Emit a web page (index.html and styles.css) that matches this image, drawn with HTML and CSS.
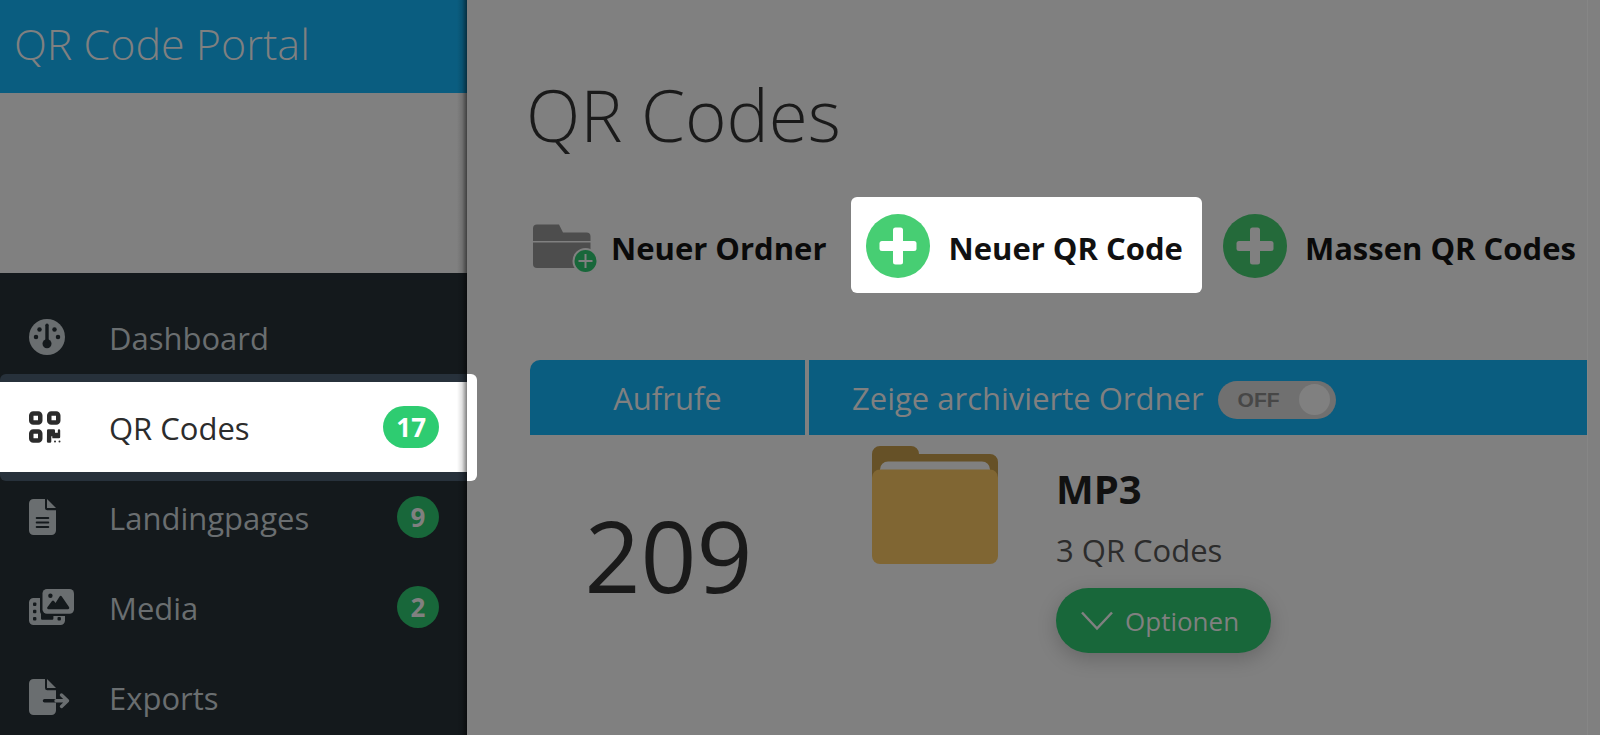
FILE: index.html
```
<!DOCTYPE html>
<html lang="de">
    <head>
        <meta charset="utf-8">
        <title>QR Code Portal</title>
        <link rel="stylesheet" href="styles.css">
    </head>
    <body>
        <aside class="sidebar">
            <header class="brand">QR Code Portal</header>
            <div class="logo-area"></div>
            <nav class="menu">
                <a class="menu-item" href="#dashboard">
                    <svg class="menu-icon" viewBox="0 0 48 36">
                        <circle cx="18" cy="18" r="18"/>
                        <g class="cut">
                            <circle cx="10.500" cy="10.500" r="2.250"/>
                            <circle cx="25.500" cy="10.500" r="2.250"/>
                            <circle cx="7" cy="18" r="2.250"/>
                            <circle cx="29" cy="18" r="2.250"/>
                            <circle cx="18" cy="24.750" r="4.500"/>
                            <rect x="16.300" y="4.500" width="3.400" height="19" rx="1.700"/>
                        </g>
                    </svg>
                    <span class="menu-label">Dashboard</span>
                </a>
                <a class="menu-item active" href="#qrcodes">
                    <svg class="menu-icon" viewBox="0 0 48 36">
                        <g class="line">
                            <rect x="2.250" y="4.500" width="9" height="9" rx="2"/>
                            <rect x="20.250" y="4.500" width="9" height="9" rx="2"/>
                            <rect x="2.250" y="22.500" width="9" height="9" rx="2"/>
                        </g>
                        <path d="M18 21.500a1.200 1.200 0 0 1 1.200-1.200h5.600a1.200 1.200 0 0 1 1.200 1.200v2.200h2.800v-2.200a1.200 1.200 0 0 1 2.400 0v6.500a1.200 1.200 0 0 1-1.200 1.200h-6.700v-2h-1v5.300a1.200 1.200 0 0 1-1.200 1.200h-2a1.200 1.200 0 0 1-1.200-1.200z"/>
                        <rect x="25" y="31.500" width="2" height="2" rx="1"/>
                        <rect x="29.500" y="31.500" width="2" height="2" rx="1"/>
                    </svg>
                    <span class="menu-label">QR Codes</span>
                    <span class="badge">17</span>
                </a>
                <a class="menu-item" href="#landingpages">
                    <svg class="menu-icon" viewBox="0 0 48 36">
                        <path d="M4.500 0H16v9a2.250 2.250 0 0 0 2.250 2.250H27V31.500a4.500 4.500 0 0 1-4.500 4.500h-18A4.500 4.500 0 0 1 0 31.500v-27A4.500 4.500 0 0 1 4.500 0z"/>
                        <path d="M18 0l9 9h-9z"/>
                        <path class="cut-line" d="M7.800 19h11.400M7.800 23.500h11.400M7.800 28h11.400"/>
                    </svg>
                    <span class="menu-label">Landingpages</span>
                    <span class="badge">9</span>
                </a>
                <a class="menu-item" href="#media">
                    <svg class="menu-icon" viewBox="0 0 48 36">
                        <path d="M4.500 9H11v13a5.500 5.500 0 0 0 1 3v4.500a1.200 1.200 0 0 0 1.200 1.200h10a1.200 1.200 0 0 0 1.200-1.200V27H36v4.500a4.500 4.500 0 0 1-4.500 4.500h-27A4.500 4.500 0 0 1 0 31.500v-18A4.500 4.500 0 0 1 4.500 9z"/>
                        <rect x="13.500" y="0" width="31.500" height="24.750" rx="4.500"/>
                        <g class="cut">
                            <rect x="4" y="13.500" width="3.400" height="3.400" rx="1"/>
                            <rect x="4" y="20.800" width="3.400" height="3.400" rx="1"/>
                            <rect x="4" y="28" width="3.400" height="3.400" rx="1"/>
                            <rect x="28.500" y="28" width="3.400" height="3.400" rx="1"/>
                            <circle cx="21.400" cy="6.800" r="2.200"/>
                            <path d="M19.500 20.200a1.300 1.300 0 0 1-1-2.200l4.500-6a1.300 1.300 0 0 1 2 0l1.500 2L30.600 7.400a1.400 1.400 0 0 1 2.200 0L40 18a1.400 1.400 0 0 1-1.100 2.200z"/>
                        </g>
                    </svg>
                    <span class="menu-label">Media</span>
                    <span class="badge">2</span>
                </a>
                <a class="menu-item" href="#exports">
                    <svg class="menu-icon" viewBox="0 0 48 36">
                        <path d="M4.500 0H16v9a2.250 2.250 0 0 0 2.250 2.250H27V31.500a4.500 4.500 0 0 1-4.500 4.500h-18A4.500 4.500 0 0 1 0 31.500v-27A4.500 4.500 0 0 1 4.500 0z"/>
                        <path d="M18 0l9 9h-9z"/>
                        <path class="cut-line arrow" d="M15.500 21.700H27"/>
                        <path class="line arrow" d="M27 21.700h11.500M32.500 16l6 5.700-6 5.700"/>
                    </svg>
                    <span class="menu-label">Exports</span>
                </a>
            </nav>
        </aside>

        <main class="content">
            <h1>QR Codes</h1>
            <div class="toolbar">
                <button class="tool" type="button">
                    <svg class="folder-add" viewBox="0 0 67 64">
                        <path class="folder-grey" d="M3 27V14.500a4 4 0 0 1 4-4h22l4 8h23.500a4 4 0 0 1 4 4V27z"/>
                        <path class="folder-grey" d="M3 28.500h57.500V50a4 4 0 0 1-4 4H7a4 4 0 0 1-4-4z"/>
                        <circle class="folder-plus" cx="55.500" cy="47" r="12"/>
                        <path class="folder-plus-line" d="M48.500 47h14M55.500 40v14"/>
                    </svg>
                    <span class="tool-label">Neuer Ordner</span>
                </button>
                <button class="tool highlight" type="button">
                    <svg class="plus" viewBox="0 0 64 64">
                        <circle cx="32" cy="32" r="32"/>
                        <rect x="27" y="13.500" width="10" height="37" rx="2.500"/>
                        <rect x="13.500" y="27" width="37" height="10" rx="2.500"/>
                    </svg>
                    <span class="tool-label">Neuer QR Code</span>
                </button>
                <button class="tool" type="button">
                    <svg class="plus" viewBox="0 0 64 64">
                        <circle cx="32" cy="32" r="32"/>
                        <rect x="27" y="13.500" width="10" height="37" rx="2.500"/>
                        <rect x="13.500" y="27" width="37" height="10" rx="2.500"/>
                    </svg>
                    <span class="tool-label">Massen QR Codes</span>
                </button>
            </div>

            <div class="list">
                <table>
                    <tr>
                        <th class="views">Aufrufe</th>
                        <th class="folders">
                            <label class="archive">
                                Zeige archivierte Ordner
                                <input class="archive-box" type="checkbox">
                                <span class="switch">OFF</span>
                            </label>
                        </th>
                    </tr>
                    <tr>
                        <td class="count">209</td>
                        <td>
                            <div class="folder-row">
                                <svg class="folder" viewBox="0 0 126 118">
                                    <path class="folder-back" d="M8 0h31a8 8 0 0 1 8 8h71a8 8 0 0 1 8 8v24H0V8a8 8 0 0 1 8-8z"/>
                                    <path class="folder-paper" d="M16 15.500h94a8 8 0 0 1 8 8v10H8v-10a8 8 0 0 1 8-8z"/>
                                    <rect class="folder-front" y="23.500" width="126" height="94.500" rx="8"/>
                                </svg>
                                <div class="folder-info">
                                    <h2>MP3</h2>
                                    <p>3 QR Codes</p>
                                    <button class="options" type="button">
                                        <svg class="chevron" viewBox="0 0 32 20">
                                            <path d="M1 1.500l15 16 15-16"/>
                                        </svg>
                                        Optionen
                                    </button>
                                </div>
                            </div>
                        </td>
                    </tr>
                </table>
            </div>
        </main>
        <div class="gutter"></div>
    </body>
</html>
```

FILE: styles.css
```
* {
    box-sizing: border-box;
}

body {
    margin: 0;
    display: flex;
    height: 100vh;
    overflow: hidden;
    font: 31px/44px "Open Sans", sans-serif;
    background-color: #808080;
    color: #1a1a1a;
}

button {
    font: inherit;
    border: none;
    background: none;
    cursor: pointer;
}

/* sidebar */
.sidebar {
    position: relative;
    z-index: 0;
    flex: 0 0 467px;
    background-color: #14191c;
}

/* shade along the right edge of the sidebar */
.sidebar::after {
    content: "";
    position: absolute;
    top: 0;
    right: 0;
    bottom: 0;
    width: 10px;
    background: linear-gradient(to right, rgba(0,0,0,0), rgba(0,0,0,0.12) 50%, rgba(0,0,0,0.5));
    pointer-events: none;
}

.brand {
    height: 93px;
    padding: 0 14px;
    font-size: 43px;
    font-weight: 300;
    line-height: 88px;
    background-color: #0a5d80;
    color: #808080;
}

.logo-area {
    height: 180px;
    background-color: #808080;
}

.menu {
    padding-top: 19px;
}

.menu-item {
    position: relative;
    display: flex;
    align-items: center;
    height: 90px;
    padding: 0 28px 0 29px;
    color: #6a6e70;
    text-decoration: none;
}

.menu-item.active {
    background-color: #fff;
    color: #2c2c2c;
}

.menu-item.active::before {
    content: "";
    position: absolute;
    z-index: -1;
    top: -8px;
    right: -10px;
    bottom: -9px;
    left: 0;
    border-radius: 6px;
    background: linear-gradient(to left, #fff 10px, #27313b 10px);
}

.menu-icon {
    width: 48px;
    height: 36px;
    margin-right: 32px;
    fill: currentColor;
}

.cut {
    fill: #14191c;
}

.cut-line {
    fill: none;
    stroke: #14191c;
    stroke-width: 2.2;
    stroke-linecap: round;
}

.line {
    fill: none;
    stroke: currentColor;
    stroke-width: 4.5;
}

.arrow {
    stroke-width: 3.4;
    stroke-linecap: round;
    stroke-linejoin: round;
}

.menu-label {
    flex: 1;
    padding-top: 2px;
}

.badge {
    min-width: 42px;
    padding: 0 13px;
    border-radius: 21px;
    font-size: 26px;
    font-weight: 700;
    line-height: 42px;
    text-align: center;
    background-color: #18673a;
    color: #808080;
}

.active .badge {
    background-color: #2ecc71;
    color: #fff;
}

/* content */
.content {
    flex: 1;
    min-width: 0;
    padding: 66px 0 0 59px;
}

h1 {
    margin: 0;
    font-size: 71px;
    font-weight: 300;
    line-height: 98px;
}

.toolbar {
    display: flex;
    gap: 6px;
    margin: 33px 0 67px -11px;
}

.tool {
    display: flex;
    align-items: center;
    gap: 18px;
    height: 96px;
    padding: 2px 19px 0 15px;
    border-radius: 6px;
    font-weight: 700;
    color: #0a0a0a;
    white-space: nowrap;
}

.tool.highlight {
    background-color: #fff;
    color: #111;
}

.tool-label {
    padding-top: 3px;
}

.folder-add {
    width: 67px;
    height: 64px;
    margin-right: -4px;
}

.folder-grey {
    fill: #4d4d4d;
}

.folder-plus {
    fill: #18673a;
    stroke: #808080;
    stroke-width: 2;
}

.folder-plus-line {
    stroke: #808080;
    stroke-width: 2;
}

.plus {
    width: 64px;
    height: 64px;
    fill: #808080;
}

.plus circle {
    fill: #246a3a;
}

.highlight .plus {
    fill: #fff;
}

.highlight .plus circle {
    fill: #47ce73;
}

.list {
    padding-left: 4px;
}

table {
    width: 100%;
    border-collapse: collapse;
}

th, td {
    padding: 0;
}

th {
    height: 75px;
    font-weight: 400;
    text-align: left;
    background-color: #0a5d80;
    color: #808080;
}

th.views {
    width: 277px;
    border-right: 4px solid #808080;
    border-top-left-radius: 10px;
    text-align: center;
}

.archive {
    display: flex;
    align-items: center;
    gap: 14px;
    padding-left: 43px;
}

.archive-box {
    position: absolute;
    opacity: 0;
}

.switch {
    display: flex;
    align-items: center;
    justify-content: space-between;
    width: 118px;
    height: 38px;
    margin-top: 4px;
    padding: 0 6px 0 20px;
    border-radius: 19px;
    font: 700 21px "Liberation Sans", sans-serif;
    background-color: #707070;
    color: #474747;
}

.switch::after {
    content: "";
    width: 31px;
    height: 31px;
    border-radius: 50%;
    background-color: #808080;
}

.count {
    font-size: 98px;
    line-height: 136px;
    text-align: center;
}

.folder-row {
    display: flex;
    gap: 58px;
    height: 240px;
    padding: 11px 0 0 65px;
}

.folder {
    width: 126px;
    height: 118px;
}

.folder-back {
    fill: #665127;
}

.folder-paper {
    fill: #808080;
}

.folder-front {
    fill: #806633;
}

.folder-info {
    padding-top: 16px;
}

h2 {
    margin: 0;
    font-size: 40px;
    line-height: 54px;
    color: #111;
}

p {
    margin: 12px 0 16px;
    color: #2c2c2c;
}

.options {
    display: flex;
    align-items: center;
    gap: 12px;
    height: 65px;
    padding: 0 32px 0 25px;
    border-radius: 33px;
    font-size: 26px;
    background-color: #18673a;
    color: #808080;
    box-shadow: 0 6px 20px rgba(0,0,0,0.2);
}

.chevron {
    width: 32px;
    height: 20px;
    fill: none;
    stroke: currentColor;
    stroke-width: 2.5;
}

.gutter {
    width: 13px;
    border-left: 1px solid #868686;
}
```
